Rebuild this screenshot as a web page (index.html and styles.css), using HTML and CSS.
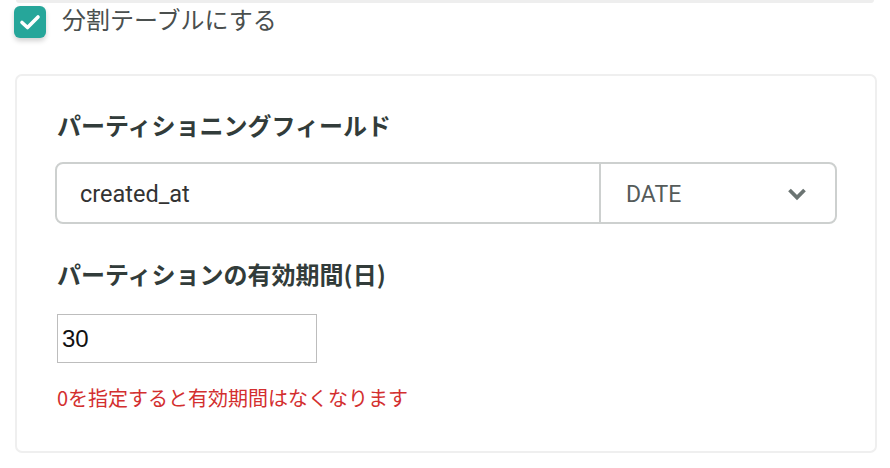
FILE: index.html
```html
<!DOCTYPE html>
<html lang="ja">
<head>
<meta charset="utf-8">
<link rel="stylesheet" href="styles.css">
</head>
<body>
<div class="prev-box"></div>
<label class="check-row">
  <span class="checkbox">
    <svg width="32" height="32" viewBox="0 0 32 32"><path d="M8 16.5 L13.5 21.5 L24 11" fill="none" stroke="#fff" stroke-width="3.6" stroke-linecap="round" stroke-linejoin="round"/></svg>
  </span>
  <span class="check-label">分割テーブルにする</span>
</label>
<section class="panel">
  <div class="field">
    <h3 class="field-title">パーティショニングフィールド</h3>
    <div class="input-group">
      <div class="group-text">created_at</div>
      <div class="group-select">
        <span>DATE</span>
        <svg class="chevron" width="20" height="14" viewBox="0 0 20 14"><path d="M2.5 3 L10 10.5 L17.5 3" fill="none" stroke="#6b7472" stroke-width="3.8" stroke-linejoin="miter"/></svg>
      </div>
    </div>
  </div>
  <div class="field field-second">
    <h3 class="field-title">パーティションの有効期間(日)</h3>
    <input class="num-input" type="text" value="30">
    <p class="hint">0を指定すると有効期間はなくなります</p>
  </div>
</section>
</body>
</html>
```

FILE: styles.css
```css
* { box-sizing: border-box; }
html, body { margin: 0; padding: 0; background: #fff; }
body {
  font-family: "Noto Sans CJK JP", "Noto Sans", sans-serif;
  width: 890px;
  height: 468px;
  overflow: hidden;
}
.prev-box {
  height: 3px;
  margin: 0 16px 0 16px;
  background: #eeeeee;
  border-radius: 0 0 4px 4px;
  width: 858px;
}
.check-row {
  display: flex;
  align-items: center;
  gap: 16px;
  margin: 3px 0 0 14px;
  height: 32px;
}
.checkbox {
  flex: none;
  width: 32px;
  height: 32px;
  border-radius: 6px;
  background: #26a69a;
  display: flex;
  align-items: center;
  justify-content: center;
  box-shadow: 0 3px 5px rgba(0,0,0,0.18);
}
.checkbox svg { display: block; }
.check-label {
  font-size: 24px;
  color: #4a4f4e;
  line-height: 32px;
  margin-top: -6px;
}
.panel {
  margin: 36px 0 0 15px;
  width: 862px;
  height: 379px;
  border: 2px solid #efefef;
  border-radius: 7px;
  padding: 31px 38px 0 38px;
}
.field-title {
  margin: 0 0 0 2px;
  font-size: 24px;
  line-height: 36px;
  font-weight: 700;
  color: #323c3a;
}
.input-group {
  margin-top: 19px;
  display: flex;
  height: 62px;
  width: 782px;
  border: 2px solid #cdd0cf;
  border-radius: 8px;
}
.group-text {
  flex: 1;
  font-family: Roboto, "Noto Sans", sans-serif;
  font-size: 23.5px;
  color: #333;
  padding-left: 23px;
  padding-top: 2px;
  display: flex;
  align-items: center;
  border-right: 2px solid #cdd0cf;
}
.group-select {
  flex: none;
  width: 234px;
  display: flex;
  align-items: center;
  justify-content: space-between;
  padding: 2px 28px 0 25px;
  font-family: Roboto, "Noto Sans", sans-serif;
  font-size: 23px;
  color: #555b5a;
}
.chevron { display: block; margin-top: 0; }
.field-second { margin-top: 32px; }
.num-input {
  display: block;
  margin: 22px 0 0 2px;
  width: 260px;
  height: 49px;
  border: 1px solid #bdbdbd;
  border-radius: 0;
  padding: 0 4px;
  font-family: "Liberation Sans", Arial, sans-serif;
  font-size: 24px;
  color: #111;
  outline: none;
}
.hint {
  margin: 20px 0 0 2px;
  font-size: 20px;
  line-height: 30px;
  color: #d32f2f;
}
```
